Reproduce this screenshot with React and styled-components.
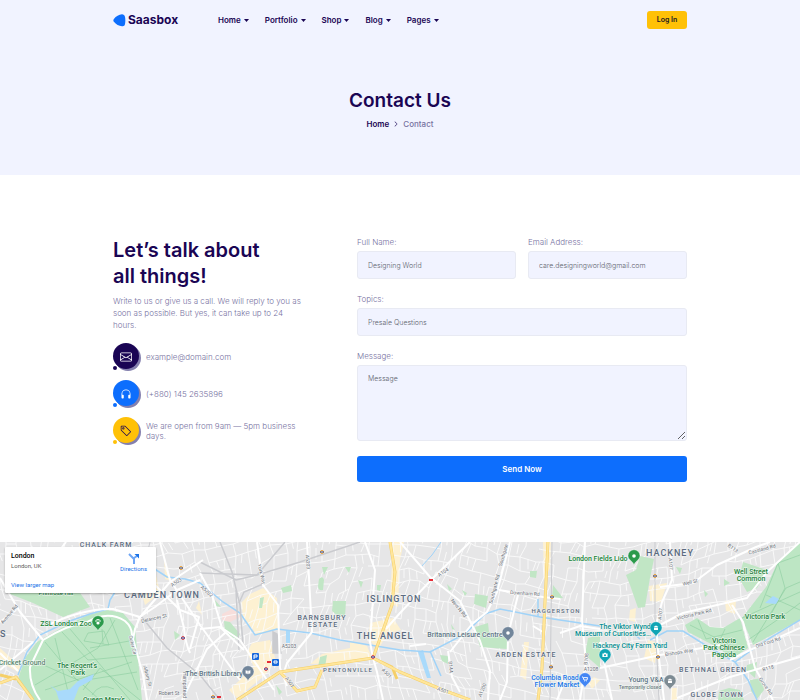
import React from "react";
import styled, { createGlobalStyle } from "styled-components";
import { BsEnvelope, BsHeadphones, BsTag, BsChevronRight } from "react-icons/bs";

const GlobalStyle = createGlobalStyle`
  *, *::before, *::after { box-sizing: border-box; }
  body {
    margin: 0;
    background: #fff;
    color: #77729f;
    font-family: Inter, "Open Sans", sans-serif;
    font-size: 8px;
    font-weight: 300;
    line-height: 12px;
  }
  a { color: inherit; text-decoration: none; }
  h1, h2, p, ul, ol { margin: 0; padding: 0; }
  ul, ol { list-style: none; }
`;

const Container = styled.div`
  width: 100%;
  max-width: 622px;
  margin: 0 auto;
  padding: 0 24px;
`;

const Hero = styled.div`
  background: #f1f3ff;
  padding-bottom: 45px;
`;

const Header = styled(Container).attrs({ as: "header" })`
  display: flex;
  align-items: center;
  height: 40px;
`;

const Logo = styled.a`
  display: flex;
  align-items: center;
  gap: 2px;
  width: 105px;
  color: #1a0554;
  font-size: 12px;
  font-weight: 700;
  svg { display: block; }
`;

const NavList = styled.ul`
  display: flex;
  gap: 16px;
`;

const NavButton = styled.button`
  display: flex;
  align-items: center;
  gap: 3px;
  padding: 0;
  border: 0;
  background: none;
  color: #1a0554;
  font: 600 8px/12px Inter, sans-serif;
  cursor: pointer;
  svg { display: block; }
`;

const LoginButton = styled.button`
  width: 40px;
  height: 18px;
  margin-left: auto;
  padding: 0;
  border: 0;
  border-radius: 3px;
  background: #ffc107;
  color: #1a1423;
  font: 600 7px/18px Inter, sans-serif;
  cursor: pointer;
`;

const Heading = styled.div`
  display: flex;
  flex-direction: column;
  align-items: center;
  padding-top: 48px;
`;

const PageTitle = styled.h1`
  color: #1a0554;
  font-size: 19px;
  line-height: 26px;
  font-weight: 600;
`;

const Crumbs = styled.ol`
  display: flex;
  align-items: center;
  gap: 4px;
  margin-top: 4px;
  font-weight: 500;
  a { color: #1a0554; font-weight: 600; }
  svg { display: block; color: #1a0554; stroke: currentColor; }
`;

const ContactSection = styled(Container).attrs({ as: "section" })`
  display: grid;
  grid-template-columns: minmax(0, 34fr) minmax(0, 55fr);
  gap: 40px;
  padding-top: 61px;
  padding-bottom: 60px;
`;

const Title = styled.h2`
  color: #1a0554;
  padding-top: 1px;
  font-size: 20px;
  line-height: 26px;
  font-weight: 600;
`;

const Intro = styled.p`
  margin-top: 6px;
`;

const ContactList = styled.ul`
  display: grid;
  gap: 10px;
  margin-top: 12px;
`;

const ContactItem = styled.li`
  display: flex;
  align-items: center;
  gap: 7px;
  padding-right: 16px;
  line-height: 10px;
`;

const Badge = styled.span`
  position: relative;
  display: grid;
  place-items: center;
  flex: none;
  width: 26px;
  height: 27px;
  &::before {
    content: "";
    position: absolute;
    inset: 0 0 1px 0;
    border-radius: 50%;
    background: ${(p) => p.$color};
    box-shadow: 2px 2px 0 #8480ae;
  }
  &::after {
    content: "";
    position: absolute;
    left: 0;
    bottom: 0;
    width: 4px;
    height: 4px;
    border-radius: 50%;
    background: ${(p) => p.$color};
    box-shadow: 0 0 0 1px #fff;
  }
  svg { position: relative; z-index: 1; color: ${(p) => p.$ink}; }
`;

const Form = styled.form`
  display: grid;
  grid-template-columns: repeat(2, minmax(0, 1fr));
  column-gap: 12px;
  row-gap: 14px;
`;

const Field = styled.div`
  display: flex;
  flex-direction: column;
  gap: 3px;
  grid-column: ${(p) => (p.$wide ? "1 / -1" : "auto")};
`;

const Label = styled.label`
  line-height: 12px;
`;

const Input = styled.input`
  width: 100%;
  height: 28px;
  padding: 0 10px;
  border: 1px solid #e8eaf3;
  border-radius: 3px;
  background: #f1f3ff;
  color: #62666f;
  outline: 0;
  font: 300 7px/12px Inter, sans-serif;
  &::placeholder { color: #62666f; opacity: 1; }
`;

const Textarea = styled(Input).attrs({ as: "textarea" })`
  height: 76px;
  padding-top: 7px;
  resize: vertical;
  display: block;
`;

const SendButton = styled.button`
  grid-column: 1 / -1;
  height: 26px;
  margin-top: 1px;
  border: 0;
  border-radius: 3px;
  background: #0d6efd;
  color: #fff;
  font: 600 8px/12px Inter, sans-serif;
  cursor: pointer;
`;

const MapPanel = styled.section`
  position: relative;
  height: 158px;
  overflow: hidden;
  background: #e6e6e7;
`;

const MapDrawing = styled.svg`
  display: block;
  width: 100%;
  height: 100%;
  font-family: Roboto, sans-serif;
  font-weight: 400;
`;

const MapCard = styled.div`
  position: absolute;
  left: 5px;
  top: 5px;
  display: flex;
  justify-content: space-between;
  width: 151px;
  height: 46px;
  padding: 4px 9px 3px 6px;
  border-radius: 1px;
  background: #fff;
  box-shadow: 0 1px 2px rgba(0, 0, 0, 0.3);
  color: #5b5b5b;
  font-family: Roboto, sans-serif;
  font-size: 6px;
  font-weight: 400;
  line-height: 10px;
  a { color: #1a73e8; }
`;

const Place = styled.div`
  display: flex;
  flex-direction: column;
  strong { color: #000; font-size: 7px; font-weight: 500; }
  a { margin-top: auto; }
`;

const Directions = styled.a`
  display: flex;
  flex-direction: column;
  align-items: center;
  padding-top: 2px;
  height: 24px;
`;

const menu = ["Home", "Portfolio", "Shop", "Blog", "Pages"];

const contacts = [
  { color: "#1a0554", ink: "#fff", Icon: BsEnvelope, text: "example@domain.com" },
  { color: "#0d6efd", ink: "#fff", Icon: BsHeadphones, text: "(+880) 145 2635896" },
  { color: "#ffc107", ink: "#1a0554", Icon: BsTag, text: "We are open from 9am — 5pm business days." },
];

/* Side streets: a gently warped grid with some links left out. */
function buildStreets() {
  let seed = 23;
  const rnd = () => {
    seed = (seed * 16807) % 2147483647;
    return seed / 2147483647;
  };
  const cols = 70;
  const rows = 18;
  const pts = [];
  for (let j = 0; j < rows; j++) {
    for (let i = 0; i < cols; i++) {
      const x = i * 12 - 10;
      const y = j * 12 + 515;
      pts.push([
        x + 9 * Math.sin(y / 31 + x / 140) + (rnd() - 0.5) * 5,
        y + 20 * Math.sin(x / 78) + (rnd() - 0.5) * 5,
      ].map((v) => Math.round(v)));
    }
  }
  let d = "";
  for (let j = 0; j < rows - 1; j++) {
    for (let i = 0; i < cols - 1; i++) {
      const a = pts[j * cols + i];
      const b = pts[j * cols + i + 1];
      const c = pts[(j + 1) * cols + i];
      if (rnd() < 0.76) d += `M${a}L${b}`;
      if (rnd() < 0.76) d += `M${a}L${c}`;
      if (rnd() < 0.35) d += `M${(a[0] + b[0]) / 2} ${(a[1] + b[1]) / 2}l${(c[0] - a[0]) * 0.7} ${(c[1] - a[1]) * 0.7}`;
    }
  }
  return d;
}
const streets = buildStreets();

const greens = [
  "M5 592L78 590L90 607L63 617L33 603Z",
  "M640 556L654 559L650 578L645 607L638 608L630 585L626 575L636 570Z",
  "M743 562L767 570L757 588L747 592L739 578Z",
  "M224 621L230 622L240 634L238 640L225 633Z",
  "M322 567L328 567L324 575ZM319 579Q323 575 324 580L323 590Q318 591 318 586Z",
  "M333 601L346 601L345 617L338 616L332 611Z",
  "M475 594L488 596L486 608L474 604Z",
  "M475 627L488 623L489 632L508 638L507 649L480 647Z",
  "M553 585L563 598L552 599ZM530 571L537 571L536 578L530 577Z",
  "M588 638L600 635V668L585 655Z",
  "M281 588L291 585L292 591L283 593ZM260 598L264 597L262 608L259 608Z",
  "M345 567L351 567L349 573ZM358 580L363 582L361 588ZM377 585L381 585L380 591L377 590Z",
  "M447 584L452 589L449 591ZM451 624L455 630L452 629ZM462 590L467 593L465 596ZM440 655L448 656L448 664L442 661Z",
  "M320 657L327 655L325 667L318 667ZM276 685L282 692L279 695Z",
  "M747 665L757 662L755 678L746 670ZM750 680L762 678L764 690L757 699L751 691Z",
  "M724 579L730 583L724 586ZM704 590L708 594L705 597ZM676 567L682 568L680 574Z",
  "M719 691L729 688L740 690L744 700H718Z",
  "M28 560L31 574L27 570ZM174 631L180 635L175 640ZM215 600L221 607L216 606Z",
];

const sand = [
  "M263 588L277 598L278 628L257 635L243 616L241 603L250 594Z",
  "M252 643L270 640L276 661L264 676L237 698L229 690L254 667L247 652Z",
  "M322 654L350 648L350 641L367 646L372 658L350 663L310 664Z",
  "M370 623L393 618L401 630L387 634L378 650L368 638Z",
  "M393 542L404 542L400 560L398 607L390 603Z",
  "M524 642L529 642L526 680L520 676Z",
  "M543 542L551 542L550 568L544 580Z",
  "M649 586L667 583L661 602L650 601ZM648 640L658 643L655 663L644 658Z",
  "M630 610L636 608L635 622L629 620ZM725 601L736 600L735 614L726 611Z",
  "M155 570L160 593L145 605L143 598ZM164 555L171 581L165 579ZM199 601L202 615L196 608Z",
  "M671 688L677 688L677 700H671ZM588 683L594 677L600 680L592 689Z",
  "M0 648L24 670L22 674L0 662Z",
];

const roads = [
  "M0 578L20 612L43 640L30 667Q29 685 40 700",
  "M43 640Q67 625 87 622Q108 610 125 621Q132 627 132 635L143 675L147 700",
  "M0 653L18 671M46 626Q83 608 113 609L140 617L170 582L203 560",
  "M140 617L135 629L133 639M138 618L155 607L177 590L200 580",
  "M160 542L170 580L200 625L240 680",
  "M190 653Q185 642 184 628L177 600M150 580L180 610L199 617L190 649",
  "M66 542L60 550M16 610L0 622M33 642L0 670",
  "M257 542L262 578L263 585L278 605L280 668L287 686",
  "M307 542L312 632L287 663L283 675",
  "M200 573L212 595L222 628L240 640L265 677L274 690",
  "M200 629L220 627L244 650M182 700L207 649L225 633",
  "M365 542L375 570L370 642L373 658L377 672L383 700",
  "M400 542L430 577L460 601L480 641L490 671L488 700",
  "M470 542L433 578L400 613L386 629M430 577L442 587",
  "M510 542L497 592L487 612L472 624L450 652",
  "M499 590L543 597L560 599M518 595L508 635L507 682L500 700",
  "M585 542L582 620L586 662L580 700",
  "M600 629L580 626L560 633",
  "M670 542L672 580L662 602L656 625L658 650L664 700",
  "M660 587L693 583L717 565L756 547L770 542",
  "M660 625L683 613L747 598L767 572L800 542",
  "M732 605L743 622L755 668L773 700",
  "M600 668L660 655L720 645M730 660L750 650L800 628",
  "M677 698L730 677L800 657",
  "M448 651L452 677L460 692M410 646L426 644",
  "M600 642L612 700M565 680L557 700M533 626L543 632",
];

const minorLabels = [
  ["A503", 176, 582, -35], ["Delancey St", 154, 618, -14], ["Outer Cir", 133, 645, 76],
  ["Albany St", 148, 676, 75], ["Robert St", 169, 693, 0], ["Hampstead", 185, 685, 90],
  ["York Way", 262, 574, 76], ["A5202", 207, 591, 42], ["A5203", 308, 562, 85],
  ["A5203", 289, 646, 0], ["A501", 290, 682, 55], ["A501", 387, 673, 48],
  ["A501", 443, 690, 20], ["A104", 443, 572, -35], ["New N Rd", 459, 608, 51],
  ["Southgate Rd", 494, 589, -76], ["Southgate", 503, 555, -74], ["Downham Rd", 525, 593, 4],
  ["A1200", 482, 690, -68], ["B144", 451, 667, 84], ["A107", 671, 564, 85],
  ["A107", 660, 614, -82], ["Well St", 690, 582, -13], ["Victoria Park Rd", 694, 614, -13],
  ["B113", 733, 548, 36], ["Cassland Rd", 762, 549, -15], ["Bishops Way", 679, 652, -9],
  ["Old Ford Rd", 768, 642, -18], ["B118", 768, 668, -17], ["Grove Rd", 766, 686, 54],
  ["B108", 586, 659, -83], ["A1208", 591, 669, 0], ["Avenue Rd", 9, 614, -50],
];

const districts = [
  ["CHALK FARM", 106, 547, 7], ["CAMDEN TOWN", 162, 598, 9],
  ["BARNSBURY", 322, 620, 7], ["ESTATE", 323, 627, 7],
  ["ISLINGTON", 394, 602, 9], ["THE ANGEL", 385, 639, 9],
  ["PENTONVILLE", 348, 672, 6], ["HAGGERSTON", 556, 613, 6],
  ["ARDEN ESTATE", 526, 657, 7], ["HACKNEY", 670, 556, 9],
  ["BETHNAL GREEN", 713, 672, 7], ["GLOBE TOWN", 717, 697, 7],
];

const places = [
  ["ZSL London Zoo", 66, 626, "#188038", 7], ["The Regent's", 77, 668, "#188038", 7],
  ["Park", 78, 675, "#188038", 7], ["Queen Mary's", 104, 702, "#188038", 7],
  ["Primrose Hill", 56, 595, "#188038", 6], ["Cricket Ground", 22, 665, "#5b8670", 7],
  ["The British Library", 214, 676, "#5f7285", 7], ["Britannia Leisure Centre", 465, 637, "#5f7285", 7],
  ["London Fields Lido", 598, 561, "#188038", 7], ["Well Street", 751, 574, "#188038", 7],
  ["Common", 751, 581, "#188038", 7], ["Victoria Park", 765, 619, "#188038", 7],
  ["Victoria", 724, 643, "#188038", 7], ["Park Chinese", 724, 650, "#188038", 7],
  ["Pagoda", 724, 657, "#188038", 7], ["The Viktor Wynd", 625, 629, "#078a91", 7],
  ["Museum of Curiosities…", 613, 636, "#078a91", 7], ["Hackney City Farm Yard", 630, 648, "#078a91", 7],
  ["Columbia Road", 555, 680, "#1a73e8", 7], ["Flower Market", 557, 687, "#1a73e8", 7],
  ["Young V&A", 646, 682, "#5f7285", 7], ["Temporarily closed", 640, 689, "#6b7680", 5],
];

const glyphs = {
  paw: <g fill="#fff"><circle cy="1" r="1.6" /><circle cx="-2" cy="-1" r=".8" /><circle cx="2" cy="-1" r=".8" /><circle cx="-.8" cy="-2.2" r=".8" /><circle cx=".8" cy="-2.2" r=".8" /></g>,
  dot: <circle r="1.8" fill="#fff" />,
  book: <path d="M-2.6-2L0-1.3L2.6-2V1.6L0 2.3L-2.6 1.6ZM0-1.3V2.3" fill="#fff" stroke="#76869a" strokeWidth=".4" />,
  museum: <path d="M-2.5-1L0-2.6L2.5-1ZM-2-.5H2V2H-2Z" fill="#fff" />,
  camera: <path d="M-2.6-1.4H-1.2L-.7-2.2H.7L1.2-1.4H2.6V2H-2.6ZM0-.8A1 1 0 1 0 0 1.2A1 1 0 1 0 0-.8Z" fill="#fff" fillRule="evenodd" />,
  cart: <path d="M-3-2H-2L-1 1H2L2.6-1.4H-1.5M-.7 2H0M1.4 2H2" fill="none" stroke="#fff" strokeWidth=".9" />,
};

const pins = [
  [98, 622, "#2b9a4b", "paw"], [634, 556, "#2b9a4b", "dot"], [248, 672, "#71859a", "book"],
  [508, 633, "#71859a", "dot"], [656, 628, "#10a5b5", "museum"], [605, 655, "#10a5b5", "camera"],
  [585, 679, "#4285f4", "cart"], [670, 681, "#7d8b93", "museum"],
];

const tubeStations = [[373, 657], [266, 669], [183, 638]];
const railStations = [[322, 552], [181, 568], [552, 597], [551, 667], [655, 576], [658, 657], [213, 697]];

function LondonMap() {
  return (
    <MapDrawing viewBox="0 542 800 158" preserveAspectRatio="xMidYMid slice" role="img" aria-label="Map of London">
      <rect y="542" width="800" height="158" fill="#e6e6e7" />
      <g fill="#fdf1d2">{sand.map((d) => <path key={d} d={d} />)}</g>
      <path d="M222 614L234 608L240 617L230 622L222 620Z" fill="#f7dedb" />
      <path d={streets} fill="none" stroke="#fafafa" strokeWidth=".9" />
      <g fill="#c1e6c5">{greens.map((d) => <path key={d} d={d} />)}</g>
      <path d="M17 682L25 658L37 642L63 627L88 615L107 610L123 613L135 627L142 700H34Z" fill="#bde6c4" />
      <path d="M685 625L697 618L710 627L723 628L740 618L748 648L733 658L713 645L688 632Z" fill="#bde6c4" />
      <path d="M800 542V620L753 645L742 618L766 587L778 562Z" fill="#bde6c4" />
      <g fill="none" stroke="#8ccda0" strokeWidth=".6">
        <path d="M45 642L75 678L100 700M55 638L70 700M32 660L80 681L137 672M62 632L88 660L140 655M70 629L130 700M90 648L135 640M35 685L98 648L115 620M84 641L88 633L104 631L109 645ZM102 629L103 644M45 690L132 662M110 618L138 690M83 690L100 668L140 700M92 695Q100 682 114 689" />
        <path d="M742 618L800 592M753 642L786 588L800 582M760 608L778 563L785 588L768 620M778 563L800 555M766 595L800 610M690 625L740 650M698 620L706 639L742 630M725 629L717 646M748 640L780 618L800 603" />
      </g>
      <g fill="#a9dafb">
        <path d="M50 685L58 691L70 689L78 681L94 674L92 680L79 687L74 700H59L56 691Z" />
        <path d="M765 603L773 596L779 599L776 604Z" />
        <path d="M286 630H290V643H286ZM418 652L423 650L431 678L427 678Z" />
      </g>
      <g fill="none" stroke="#a0d3f8" strokeWidth="1.5">
        <path d="M18 675L27 652L40 635L67 622L90 614L108 609L110 600L115 592M150 566L167 577L185 579L200 583L223 602L240 613L255 635L277 629L310 633L340 640L400 650L430 652L465 634L485 614L500 609L540 617L600 626" />
        <path d="M430 651L441 676M538 599V617M650 640L667 631L683 631L710 648L735 662L760 644L800 620M735 662L748 680L757 700M640 639L632 632" />
        <path d="M441 542L432 555L421 567" strokeWidth="1" />
      </g>
      <g fill="none" stroke="#cacbcf" strokeWidth="1.5">
        <path d="M220 542L232 572L240 605L243 645M236 590L239 650M200 573L257 575L300 562L360 542" />
        <path d="M257 575L285 542M200 562L236 580L257 575M239 603L244 592L263 584M140 615L167 648L200 675L220 700" />
        <path d="M655 542V618L659 700M552 542L550 700M150 542L143 570" strokeWidth="1" />
        <path d="M273 632V653L281 653L277 634Z" fill="#cacbcf" />
      </g>
      <g fill="none" stroke="#fff" strokeWidth="2" strokeLinejoin="round">{roads.map((d) => <path key={d} d={d} />)}</g>
      <path d="M390 542L395 572L392 605L373 658L280 672L237 700M280 672L289 682L297 691L315 687L322 670M373 658L400 672L443 690L470 700M373 658L392 667L397 679M548 542L545 602L542 668L538 700M0 683L16 677L33 700M0 675L16 679" fill="none" stroke="#f5cf68" strokeWidth="3" strokeLinejoin="round" />
      <path d="M390 542L395 572L392 605L373 658L280 672L237 700M280 672L289 682L297 691L315 687L322 670M373 658L400 672L443 690L470 700M548 542L545 602L542 668L538 700M0 683L16 677L33 700" fill="none" stroke="#ffe69a" strokeWidth="2" strokeLinejoin="round" />
      {tubeStations.map(([x, y]) => (
        <g key={x}>
          <circle cx={x} cy={y} r="1.5" fill="#fff" stroke="#e0454d" />
          <path d={`M${x - 2} ${y}h4`} stroke="#24479b" strokeWidth="1" />
        </g>
      ))}
      {railStations.map(([x, y]) => (
        <g key={x}>
          <circle cx={x} cy={y} r="1.5" fill="#fff" stroke="#f0a02c" />
          <path d={`M${x - 2} ${y}h4`} stroke="#24479b" strokeWidth="1" />
        </g>
      ))}
      <path d="M429 580h4M267 662h4M217 697h4" stroke="#e52b36" strokeWidth="2" />
      <g fill="#1768dc"><rect x="252" y="653" width="7" height="7" rx="1" /><rect x="272" y="659" width="7" height="7" rx="1" /></g>
      <g fill="none" stroke="#fff" strokeWidth="1"><path d="M254 655h3v2h-3zM254 659v-2M274 661h3v2h-3z" /></g>
      <g fontSize="5" fill="#6a7078" stroke="#f7f7f7" strokeWidth="1" paintOrder="stroke" textAnchor="middle">
        {minorLabels.map(([t, x, y, r], i) => <text key={i} transform={`translate(${x} ${y}) rotate(${r})`} y="2">{t}</text>)}
      </g>
      <g fill="#5b6b80" stroke="#f3f3f3" strokeWidth="1" paintOrder="stroke" textAnchor="middle" fontWeight="500" letterSpacing="1">
        {districts.map(([t, x, y, s]) => <text key={t} x={x} y={y} fontSize={s}>{t}</text>)}
      </g>
      <text x="0" y="637" fontSize="9" fontWeight="500" fill="#5b6b80">S</text>
      <g stroke="#f3faf4" strokeWidth="1" paintOrder="stroke" textAnchor="middle" fontWeight="500">
        {places.map(([t, x, y, c, s]) => <text key={t} x={x} y={y} fill={c} fontSize={s}>{t}</text>)}
      </g>
      {pins.map(([x, y, c, g]) => (
        <g key={x} transform={`translate(${x} ${y})`}>
          <path d="M0 9C-1 5-6 4-6-.3A6 6 0 0 1 6-.3C6 4 1 5 0 9Z" fill={c} stroke="#fff" strokeWidth=".4" />
          {glyphs[g]}
        </g>
      ))}
    </MapDrawing>
  );
}

export default function App() {
  return (
    <>
      <GlobalStyle />
      <Hero>
        <Header>
          <Logo href="#">
            <svg width="13" height="13" viewBox="0 0 13 13" aria-hidden="true">
              <path d="M.9 5C3 2.1 6 .6 9 .3Q11.6 .2 12 2.8Q12.7 6.5 12 10.2Q11.6 12.6 9 12.2C6 11.9 3 10.6.9 7.8Q-.2 6.4.9 5Z" fill="#0d6efd" />
            </svg>
            Saasbox
          </Logo>
          <nav aria-label="Main">
            <NavList>
              {menu.map((m) => (
                <li key={m}>
                  <NavButton type="button">
                    {m}
                    <svg width="5" height="3" viewBox="0 0 5 3" aria-hidden="true"><path d="M0 0H5L2.5 3Z" fill="currentColor" /></svg>
                  </NavButton>
                </li>
              ))}
            </NavList>
          </nav>
          <LoginButton type="button">Log In</LoginButton>
        </Header>
        <Heading>
          <PageTitle>Contact Us</PageTitle>
          <Crumbs>
            <li><a href="#">Home</a></li>
            <li aria-hidden="true"><BsChevronRight size={6} /></li>
            <li>Contact</li>
          </Crumbs>
        </Heading>
      </Hero>
      <ContactSection>
        <div>
          <Title>Let’s talk about<br />all things!</Title>
          <Intro>
            Write to us or give us a call. We will reply to you as<br />
            soon as possible. But yes, it can take up to 24<br />
            hours.
          </Intro>
          <ContactList>
            {contacts.map(({ color, ink, Icon, text }) => (
              <ContactItem key={text}>
                <Badge $color={color} $ink={ink}><Icon size={12} /></Badge>
                <span>{text}</span>
              </ContactItem>
            ))}
          </ContactList>
        </div>
        <Form onSubmit={(e) => e.preventDefault()}>
          <Field>
            <Label htmlFor="name">Full Name:</Label>
            <Input id="name" placeholder="Designing World" />
          </Field>
          <Field>
            <Label htmlFor="email">Email Address:</Label>
            <Input id="email" type="email" placeholder="care.designingworld@gmail.com" />
          </Field>
          <Field $wide>
            <Label htmlFor="topics">Topics:</Label>
            <Input id="topics" placeholder="Presale Questions" />
          </Field>
          <Field $wide>
            <Label htmlFor="message">Message:</Label>
            <Textarea id="message" placeholder="Message" />
          </Field>
          <SendButton type="submit">Send Now</SendButton>
        </Form>
      </ContactSection>
      <MapPanel>
        <LondonMap />
        <MapCard>
          <Place>
            <strong>London</strong>
            <span>London, UK</span>
            <a href="#">View larger map</a>
          </Place>
          <Directions href="#">
            <svg width="12" height="11" viewBox="0 0 12 11" aria-hidden="true">
              <path d="M1 1L6 6V11M6 6V5L9 3" fill="none" stroke="#6ea6f5" strokeWidth="2" />
              <path d="M6.5 1H11V5.5Z" fill="#1a73e8" />
            </svg>
            Directions
          </Directions>
        </MapCard>
      </MapPanel>
    </>
  );
}
